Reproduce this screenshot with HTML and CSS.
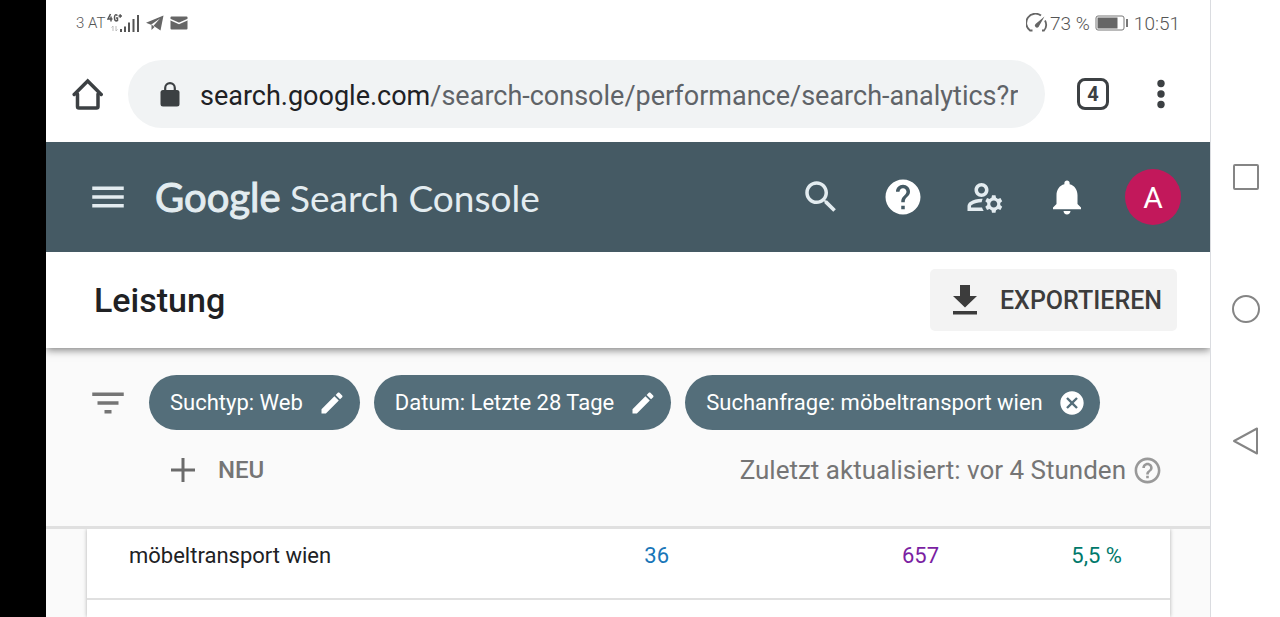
FILE: index.html
```html
<!DOCTYPE html>
<html lang="de">
<head>
    <meta charset="utf-8">
    <meta name="viewport" content="width=device-width, initial-scale=1">
    <title>Leistung - Google Search Console</title>
    <link rel="stylesheet" href="styles.css">
</head>
<body>
    <div class="phone">
        <main class="screen">
            <div class="status-bar">
                <div class="status-left">
                    <span class="carrier">3 AT</span>
                    <svg class="signal" viewBox="0 0 33 20" width="33" height="20">
                        <g fill="none" stroke="#555" stroke-width="1.500">
                            <path d="M3.500 1 L1 6 H5.500 M4 3.500 V8.500"/>
                            <path d="M10.500 2.500 Q7.500 .5 7.500 4.500 Q7.500 9 10.500 7.500 V5 H9"/>
                            <path d="M11.500 3 H15 M13.200 1.200 V4.800"/>
                        </g>
                        <path d="M6 13v5M4.500 14.500L6 13M9 13v5M9 18l1.500-1.500" fill="none" stroke="#bbb"/>
                        <path d="M13 16h2v3h-2zM17 13.500h2V19h-2zM21 9.500h2V19h-2zM25.500 6h2v13h-2zM30 2h2v17h-2z" fill="#555"/>
                    </svg>
                    <svg class="status-icon" viewBox="0 0 18 16" width="18" height="16">
                        <path d="M17.500.5L0 7.800l5 2L14 3.500 7.500 10.800l7 4.700z" fill="#666"/>
                        <path d="M5.500 9.500v5.500l3-3z" fill="#666"/>
                    </svg>
                    <svg class="status-icon" viewBox="0 0 18 14" width="18" height="14">
                        <rect x="0.500" y="0.500" width="17" height="13" rx="1" fill="#666"/>
                        <path d="M0 3.500l9 4 9-4" fill="none" stroke="#fff" stroke-width="1.500"/>
                    </svg>
                </div>
                <div class="status-right">
                    <svg viewBox="0 0 22 20" width="22" height="20" fill="none" stroke="#666" stroke-width="1.800">
                        <path d="M6.500 17.500H4A9 9 0 0 1 15 2.500M19 7.500a9 9 0 0 1-1 10H16"/>
                        <path d="M18.500 3.500L9.500 11a2 2 0 0 0 3 3z" fill="#666" stroke="none"/>
                    </svg>
                    <span class="battery-text">73 %</span>
                    <svg class="battery" viewBox="0 0 34 16" width="34" height="16">
                        <rect x="1" y="1" width="28" height="14" rx="2" fill="none" stroke="#777"/>
                        <rect x="2.500" y="2.500" width="20" height="11" fill="#666"/>
                        <rect x="31" y="4" width="2" height="8" fill="#777"/>
                    </svg>
                    <span>10:51</span>
                </div>
            </div>

            <div class="browser-bar">
                <button class="icon-btn" aria-label="Startseite">
                    <svg viewBox="0 0 32 32" width="32" height="32" fill="none" stroke="#3c4043" stroke-width="3.500" stroke-linejoin="round" stroke-linecap="round">
                        <path d="M5.500 16v12.500a1.500 1.500 0 0 0 1.500 1.500h17.500a1.500 1.500 0 0 0 1.500-1.500V16"/>
                        <path d="M2.200 16.500L15.700 3l13.500 13.500" stroke-linejoin="miter"/>
                    </svg>
                </button>
                <button class="url-bar">
                    <svg viewBox="0 0 20 25" width="20" height="25">
                        <rect x="0.500" y="8" width="19" height="16.500" rx="2.500" fill="#3c4043"/>
                        <path d="M5.200 9V6a4.800 4.800 0 0 1 9.600 0v3" fill="none" stroke="#3c4043" stroke-width="2.200"/>
                    </svg>
                    <span class="url"><span class="domain">search.google.com</span>/search-console/performance/search-analytics?r</span>
                </button>
                <button class="tabs-btn" aria-label="4 Tabs">4</button>
                <button class="icon-btn more-btn" aria-label="Mehr">
                    <svg viewBox="0 0 8 32" width="8" height="32" fill="#3c4043">
                        <circle cx="4" cy="5.500" r="3.700"/>
                        <circle cx="4" cy="16" r="3.700"/>
                        <circle cx="4" cy="26.500" r="3.700"/>
                    </svg>
                </button>
            </div>

            <header class="app-header">
                <button class="icon-btn" aria-label="Menü">
                    <svg viewBox="0 0 24 24" width="42" height="42" fill="#e3ecf0"><path d="M3 18h18v-2H3v2zm0-5h18v-2H3v2zm0-7v2h18V6H3z"/></svg>
                </button>
                <a class="logo" href="#"><span class="logo-google">Google</span> <span class="logo-product">Search Console</span></a>
                <div class="header-icons">
                    <button class="icon-btn" aria-label="Suchen">
                        <svg viewBox="0 0 24 24" width="42" height="42" fill="#e3ecf0"><path d="M15.500 14h-.79l-.28-.27C15.410 12.590 16 11.110 16 9.500 16 5.910 13.090 3 9.500 3S3 5.910 3 9.500 5.910 16 9.500 16c1.610 0 3.090-.59 4.230-1.570l.27.28v.79l5 4.990L20.490 19l-4.990-5zm-6 0C7.010 14 5 11.990 5 9.500S7.010 5 9.500 5 14 7.010 14 9.500 11.990 14 9.500 14z"/></svg>
                    </button>
                    <button class="icon-btn" aria-label="Hilfe">
                        <svg viewBox="0 0 24 24" width="42" height="42" fill="#fff"><path d="M12 2C6.480 2 2 6.480 2 12s4.480 10 10 10 10-4.480 10-10S17.520 2 12 2zm1 17h-2v-2h2v2zm2.070-7.750l-.9.920C13.450 12.900 13 13.500 13 15h-2v-.5c0-1.100.45-2.100 1.170-2.830l1.240-1.260c.37-.36.59-.86.59-1.410 0-1.100-.9-2-2-2s-2 .9-2 2H8c0-2.210 1.790-4 4-4s4 1.790 4 4c0 .88-.36 1.680-.93 2.250z"/></svg>
                    </button>
                    <button class="icon-btn" aria-label="Nutzereinstellungen">
                        <svg viewBox="0 0 24 24" width="42" height="42" fill="#e3ecf0">
                            <path d="M4 18v-.65c0-.34.16-.66.41-.81C6.100 15.530 8.030 15 10 15c.03 0 .05 0 .08.01.1-.7.3-1.370.59-1.980-.22-.02-.44-.03-.67-.03-2.420 0-4.680.67-6.610 1.820-.88.52-1.390 1.500-1.390 2.530V20h9.260c-.42-.6-.75-1.280-.97-2H4z"/>
                            <path d="M10 12c2.210 0 4-1.790 4-4s-1.790-4-4-4-4 1.790-4 4 1.790 4 4 4zm0-6c1.100 0 2 .9 2 2s-.9 2-2 2-2-.9-2-2 .9-2 2-2z"/>
                            <path d="M20.750 16c0-.22-.03-.42-.06-.63l1.140-1.010-1-1.730-1.450.49c-.32-.27-.68-.48-1.080-.63L18 11h-2l-.3 1.490c-.4.15-.76.36-1.080.63l-1.450-.49-1 1.730 1.140 1.010c-.03.21-.06.41-.06.63s.03.42.06.63l-1.140 1.010 1 1.730 1.450-.49c.32.27.68.48 1.080.63L16 21h2l.3-1.490c.4-.15.76-.36 1.080-.63l1.450.49 1-1.730-1.140-1.010c.03-.21.06-.41.06-.63zM17 18c-1.100 0-2-.9-2-2s.9-2 2-2 2 .9 2 2-.9 2-2 2z"/>
                        </svg>
                    </button>
                    <button class="icon-btn" aria-label="Benachrichtigungen">
                        <svg viewBox="0 0 24 24" width="42" height="42" fill="#fff"><path d="M12 22c1.100 0 2-.9 2-2h-4c0 1.100.89 2 2 2zm6-6v-5c0-3.070-1.640-5.640-4.500-6.320V4c0-.83-.67-1.500-1.500-1.500s-1.500.67-1.500 1.500v.68C7.630 5.360 6 7.920 6 11v5l-2 2v1h16v-1l-2-2z"/></svg>
                    </button>
                </div>
                <button class="avatar" aria-label="Konto">A</button>
            </header>

            <div class="title-bar">
                <h1>Leistung</h1>
                <button class="export-btn">
                    <svg viewBox="0 0 24 30" width="24" height="30" fill="#3c3c3c"><path d="M7 0h10v11h7L12 22.500 0 11h7zM0 26h24v3.500H0z"/></svg>
                    Exportieren
                </button>
            </div>

            <section class="filters">
                <svg class="filter-icon" viewBox="0 0 24 24" width="42" height="42" fill="#757575"><path d="M10 18h4v-2h-4v2zM3 6v2h18V6H3zm3 7h12v-2H6v2z"/></svg>
                <div class="chips">
                    <button class="chip">Suchtyp: Web
                        <svg viewBox="0 0 24 24" width="28" height="28" fill="#fff"><path d="M3 17.250V21h3.750L17.810 9.940l-3.750-3.750L3 17.250zM20.710 7.040c.39-.39.39-1.020 0-1.410l-2.340-2.340c-.39-.39-1.020-.39-1.410 0l-1.830 1.830 3.750 3.750 1.830-1.830z"/></svg>
                    </button>
                    <button class="chip">Datum: Letzte 28 Tage
                        <svg viewBox="0 0 24 24" width="28" height="28" fill="#fff"><path d="M3 17.250V21h3.750L17.810 9.940l-3.750-3.750L3 17.250zM20.710 7.040c.39-.39.39-1.020 0-1.410l-2.340-2.340c-.39-.39-1.020-.39-1.410 0l-1.830 1.830 3.750 3.750 1.830-1.830z"/></svg>
                    </button>
                    <button class="chip">Suchanfrage: möbeltransport wien
                        <svg viewBox="0 0 24 24" width="28" height="28" fill="#fff"><path d="M12 2C6.470 2 2 6.470 2 12s4.470 10 10 10 10-4.470 10-10S17.530 2 12 2zm5 13.590L15.590 17 12 13.410 8.410 17 7 15.590 10.590 12 7 8.410 8.410 7 12 10.590 15.590 7 17 8.410 13.410 12 17 15.590z"/></svg>
                    </button>
                </div>
                <div class="filter-row">
                    <button class="new-btn">
                        <svg viewBox="0 0 24 24" width="24" height="24" stroke="#6b6b6b" stroke-width="3"><path d="M12 0v24M0 12h24"/></svg>
                        Neu
                    </button>
                    <div class="updated">
                        Zuletzt aktualisiert: vor 4 Stunden
                        <svg viewBox="0 0 24 24" width="31" height="31" fill="#999"><path d="M11 18h2v-2h-2v2zm1-16C6.480 2 2 6.480 2 12s4.480 10 10 10 10-4.480 10-10S17.520 2 12 2zm0 18c-4.410 0-8-3.590-8-8s3.590-8 8-8 8 3.590 8 8-3.590 8-8 8zm0-14c-2.210 0-4 1.790-4 4h2c0-1.100.9-2 2-2s2 .9 2 2c0 2-3 1.750-3 5h2c0-2.250 3-2.500 3-5 0-2.210-1.790-4-4-4z"/></svg>
                    </div>
                </div>
            </section>

            <section class="results">
                <div class="card">
                    <table>
                        <tbody>
                            <tr>
                                <td class="query">möbeltransport wien</td>
                                <td class="clicks">36</td>
                                <td class="impressions">657</td>
                                <td class="ctr">5,5 %</td>
                            </tr>
                        </tbody>
                    </table>
                </div>
            </section>
        </main>

        <nav class="system-nav">
            <button class="icon-btn" aria-label="Übersicht">
                <svg viewBox="0 0 28 28" width="28" height="28" fill="none" stroke="#858585" stroke-width="2"><rect x="2" y="2" width="24" height="24" rx="1"/></svg>
            </button>
            <button class="icon-btn" aria-label="Home">
                <svg viewBox="0 0 28 28" width="28" height="28" fill="none" stroke="#858585" stroke-width="2"><circle cx="14" cy="14" r="13"/></svg>
            </button>
            <button class="icon-btn" aria-label="Zurück">
                <svg viewBox="0 0 28 28" width="28" height="28" fill="none" stroke="#858585" stroke-width="2" stroke-linejoin="round"><path d="M25 1.500v25L2 14z"/></svg>
            </button>
        </nav>
    </div>
</body>
</html>
```
FILE: styles.css
```css
* {
    box-sizing: border-box;
}

body {
    margin: 0;
    font-family: Roboto, Arial, sans-serif;
    color: #202124;
    background: #fff;
}

button {
    font-family: inherit;
    border: none;
    padding: 0;
    background: none;
    cursor: pointer;
}

svg {
    display: block;
    flex-shrink: 0;
}

.phone {
    display: flex;
    height: 100vh;
    overflow: hidden;
    border-left: 46px solid #000;
}

.screen {
    flex: 1;
    min-width: 0;
    display: flex;
    flex-direction: column;
    background: #fafafa;
}

/* status bar */
.status-bar {
    display: flex;
    justify-content: space-between;
    align-items: center;
    height: 46px;
    padding: 0 30px;
    background: #fff;
    color: #555;
    font-size: 19px;
    font-weight: 300;
    flex-shrink: 0;
}

.status-left,
.status-right {
    display: flex;
    align-items: center;
}

.carrier {
    font-size: 15px;
    margin-right: 2px;
}

.status-icon {
    margin-left: 6px;
}

.battery-text {
    margin-left: 2px;
}

.battery {
    margin: 0 5px;
}

/* browser toolbar */
.browser-bar {
    display: flex;
    align-items: center;
    padding: 14px 45px 14px 26px;
    background: #fff;
    flex-shrink: 0;
}

.url-bar {
    flex: 1;
    min-width: 0;
    height: 68px;
    margin: 0 32px 0 24px;
    padding: 0 16px 0 32px;
    display: flex;
    align-items: center;
    gap: 20px;
    border-radius: 34px;
    background: #f1f3f4;
    font-size: 27px;
    color: #5f6368;
}

.url {
    padding-top: 3px;
    white-space: nowrap;
    overflow: hidden;
}

.domain {
    color: #202124;
}

.tabs-btn {
    width: 32px;
    height: 32px;
    border: 3px solid #3c4043;
    border-radius: 8px;
    font-size: 20px;
    font-weight: bold;
    color: #3c4043;
}

.more-btn {
    margin-left: 48px;
}

/* search console header */
.app-header {
    display: flex;
    align-items: center;
    height: 110px;
    padding: 0 29px 0 41px;
    background: #455a64;
    flex-shrink: 0;
}

.logo {
    flex: 1;
    margin-left: 26px;
    font-family: Lato, sans-serif;
    font-size: 37px;
    white-space: nowrap;
    color: #e3ecf0;
    text-decoration: none;
}

.logo-google {
    font-size: 40px;
    -webkit-text-stroke: 1px #e3ecf0;
}

.header-icons {
    display: flex;
    gap: 40px;
}

.avatar {
    width: 56px;
    height: 56px;
    margin-left: 37px;
    border-radius: 50%;
    background: #c2185b;
    color: #fff;
    font-size: 30px;
}

/* page title */
.title-bar {
    display: flex;
    align-items: center;
    justify-content: space-between;
    height: 96px;
    padding: 0 33px 0 48px;
    background: #fff;
    box-shadow: 0 2px 8px rgba(0,0,0,0.5);
    clip-path: inset(0 0 -20px 0);
    flex-shrink: 0;
    z-index: 1;
}

h1 {
    margin: 0;
    font-size: 34px;
    font-weight: 500;
}

.export-btn {
    display: flex;
    align-items: center;
    gap: 23px;
    height: 62px;
    padding: 0 15px 0 23px;
    border-radius: 5px;
    background: #f3f3f3;
    color: #3c3c3c;
    font-size: 25px;
    font-weight: 500;
    text-transform: uppercase;
}

/* filters */
.filters {
    display: grid;
    grid-template-columns: 42px 1fr;
    column-gap: 20px;
    padding: 27px 47px 28px 41px;
    border-bottom: 3px solid #e0e0e0;
    flex-shrink: 0;
}

.filter-icon {
    align-self: center;
}

.chips {
    display: flex;
    gap: 14px;
}

.chip {
    display: flex;
    align-items: center;
    gap: 15px;
    height: 55px;
    padding: 0 14px 0 21px;
    border-radius: 28px;
    background: #546e7a;
    color: #fff;
    font-size: 22px;
    white-space: nowrap;
}

.filter-row {
    grid-column: 2;
    display: flex;
    justify-content: space-between;
    align-items: center;
    padding: 12px 0 0 22px;
    height: 68px;
}

.new-btn {
    display: flex;
    align-items: center;
    gap: 23px;
    font-size: 24px;
    font-weight: 500;
    text-transform: uppercase;
    color: #757575;
}

.updated {
    display: flex;
    align-items: center;
    gap: 6px;
    font-size: 26px;
    color: #757575;
}

/* table */
.results {
    flex: 1;
    min-height: 0;
    display: flex;
    padding: 0 40px 0 41px;
    overflow: hidden;
}

.card {
    flex: 1;
    background: #fff;
    box-shadow: 0 0 4px rgba(0,0,0,0.3);
}

table {
    width: 100%;
    table-layout: fixed;
    border-collapse: collapse;
    font-size: 22px;
}

td {
    height: 70px;
    padding: 0 0 16px;
    text-align: right;
    border-bottom: 2px solid #e0e0e0;
}

.query {
    width: 30%;
    padding-left: 42px;
    text-align: left;
}

.clicks {
    color: #1976b8;
}

.impressions {
    width: 270px;
    color: #7b1fa2;
}

.ctr {
    width: 231px;
    padding-right: 48px;
    color: #00796b;
}

/* android buttons */
.system-nav {
    display: flex;
    flex-direction: column;
    align-items: center;
    justify-content: center;
    gap: 104px;
    width: 70px;
    border-left: 1px solid #dadce0;
    background: #fff;
    flex-shrink: 0;
}
```
